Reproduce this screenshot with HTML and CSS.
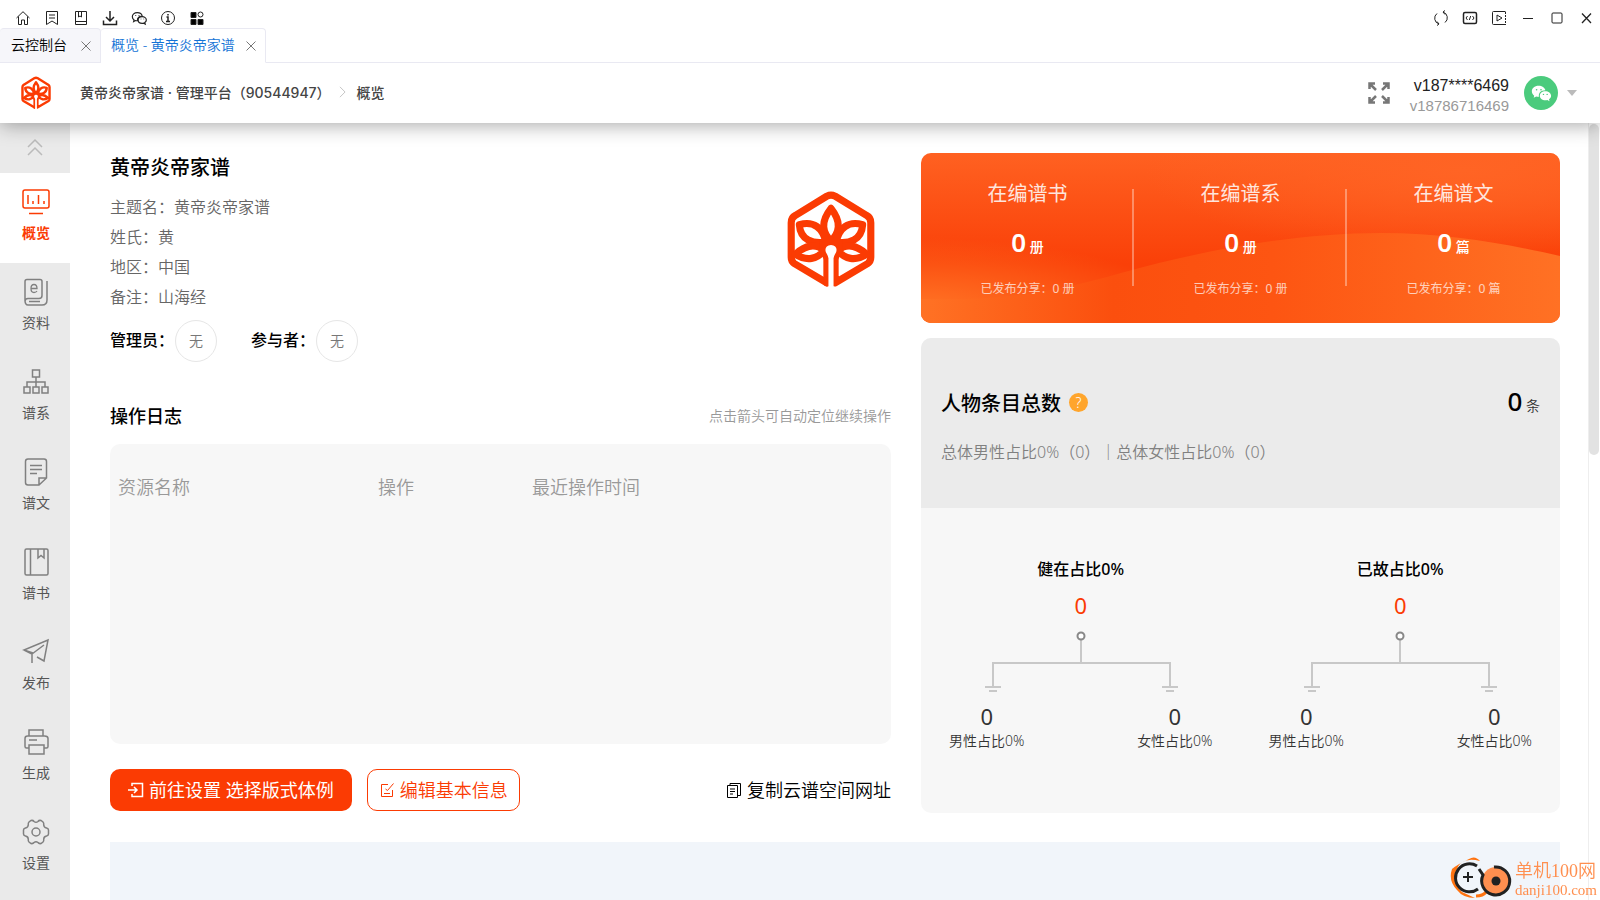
FILE: index.html
```html
<!DOCTYPE html>
<html lang="zh-CN">
<head>
<meta charset="utf-8">
<title>概览 - 黄帝炎帝家谱</title>
<link rel="stylesheet" href="styles.css">
</head>
<body>
<svg class="defs" aria-hidden="true">
  <symbol id="logo" viewBox="0 0 90 98">
    <g fill="none" stroke="#fb3b03" stroke-width="7" stroke-linejoin="round" stroke-linecap="round">
      <path d="M41 91 9 72Q6 70 6 66V32Q6 27 10 25L41 6Q45 4 49 6L80 25Q84 27 84 32V66Q84 70 81 72L49 91V65"/>
      <path d="M41 91V65"/>
      <path d="M45 18C34 32 37 42 45 50C53 42 56 32 45 18Z"/>
      <path d="M14 34C15 49 27 53 40 51C37 37 28 30 14 34ZM76 34C75 49 63 53 50 51C53 37 62 30 76 34Z"/>
      <path d="M10 63C21 70 32 68 38 59C30 52 20 54 10 63ZM80 63C69 70 58 68 52 59C60 52 70 54 80 63Z"/>
    </g>
    <path d="M34 48H56V60L51 70H39L34 60Z" fill="#fb3b03"/>
    <path d="M42.500 98V67Q42 64 40 61Q38 55 45 54Q52 55 50 61Q48 64 47.500 67V98Z" fill="#fff"/>
  </symbol>
  <symbol id="close" viewBox="0 0 12 12"><path d="m1.500 1.500 9 9m0-9-9 9" fill="none" stroke="currentColor"/></symbol>
  <symbol id="wechat" viewBox="0 0 24 24">
    <path d="M9.500 4C4.800 4 2 7 2 10.200c0 2 1 3.500 2.600 4.700L4 17.300l2.800-1.500c1 .3 2 .4 3 .3C9 12 12 9 16.800 9 16.200 6 13 4 9.500 4Z"/>
    <path d="M16.700 10c-3.500 0-6 2.300-6 5s2.500 5 6 5c.8 0 1.500-.1 2.200-.3l2.400 1.300-.6-2.200c1.500-1 2.300-2.300 2.300-3.800 0-2.700-2.800-5-6.300-5Z"/>
  </symbol>
  <symbol id="tree" viewBox="0 0 194 62">
    <g fill="none" stroke="#c8c8c8" stroke-width="2">
      <path d="M97 9v23M9 56V32h177v24M1 56h16M5 60h8M178 56h16M182 60h8"/>
    </g>
    <circle cx="97" cy="5" r="3.500" fill="#fff" stroke="#888" stroke-width="2"/>
  </symbol>
</svg>

<div class="toolbar">
  <div class="tools">
    <button aria-label="主页"><svg viewBox="0 0 16 16"><path d="M1.500 8 8 1.700 14.500 8M3.500 6.500v8h3V10h3v4.500h3v-8"/></svg></button>
    <button aria-label="书签"><svg viewBox="0 0 16 16"><path d="M2.500 1.500h11v13L8 11l-5.500 3.500ZM5 5h6M5 8h6"/></svg></button>
    <button aria-label="谱书"><svg viewBox="0 0 16 16"><path d="M2.500 1.500h11v13h-11ZM2.500 11.500h11M5.500 1.500V7L7 6l1.500 1V1.500"/></svg></button>
    <button aria-label="下载"><svg viewBox="0 0 16 16" stroke-width="1.500"><path d="M8 1v10M4 7l4 4 4-4M1.500 10.500v4h13v-4"/></svg></button>
    <button aria-label="微信"><svg viewBox="0 0 24 24" stroke-width="1.800"><use href="#wechat"/><path d="M7 8v1m5-1v1m3 4v1m4-1v1"/></svg></button>
    <button aria-label="信息"><svg viewBox="0 0 16 16"><circle cx="8" cy="8" r="6.500"/><path d="M8 4v1.500M6.500 7H8v4.500M6 11.500h4" stroke-width="1.500"/></svg></button>
    <button aria-label="应用"><svg viewBox="0 0 16 16"><path d="M2 2.500h5v5H2ZM2 9.500h5v5H2ZM9 9.500h5v5H9Z" fill="#000"/><circle cx="11.500" cy="4.500" r="2.500"/></svg></button>
  </div>
  <div class="tools">
    <button aria-label="刷新"><svg viewBox="0 0 16 16"><path d="M6 14A6 6 0 0 1 4 3.500M10 2A6 6 0 0 1 12 12.500M12 .5 10 2l2 2.500M4 15.500 6 14l-2-2.500"/></svg></button>
    <button aria-label="代码"><svg viewBox="0 0 16 16"><rect x="1.500" y="2.500" width="13" height="11" rx="1.500" stroke-width="1.500"/><path d="M5.500 6 4 8l1.500 2M10.500 6 12 8l-1.500 2M8.700 6l-1.400 4"/></svg></button>
    <button aria-label="播放"><svg viewBox="0 0 16 16"><path d="M14.500 1.500h-12q-1 0-1 1v11q0 1 1 1h12M6 5v6l5-3Z"/><path d="M14.500 2v13" stroke-dasharray="2 1"/></svg></button>
    <button aria-label="最小化"><svg viewBox="0 0 16 16"><path d="M3 8.500h10"/></svg></button>
    <button aria-label="最大化"><svg viewBox="0 0 16 16"><rect x="3" y="3" width="10" height="10" rx="1"/></svg></button>
    <button aria-label="关闭"><svg viewBox="0 0 16 16" stroke-width="1.300"><path d="m4 3.500 9 9.500m0-9.500L4 13"/></svg></button>
  </div>
</div>

<div class="tabs">
  <div class="tab"><a href="#">云控制台</a><button aria-label="关闭标签"><svg><use href="#close"/></svg></button></div>
  <div class="tab active"><a href="#">概览 - 黄帝炎帝家谱</a><button aria-label="关闭标签"><svg><use href="#close"/></svg></button></div>
</div>

<header class="header">
  <svg class="brand"><use href="#logo"/></svg>
  <nav class="crumbs"><a href="#">黄帝炎帝家谱 · 管理平台（90544947）</a><svg viewBox="0 0 8 14"><path d="m1 1 6 6-6 6"/></svg><a href="#">概览</a></nav>
  <button class="expand" aria-label="全屏"><svg viewBox="0 0 22 22"><path d="M1.500 7V1.500H7M15 1.500h5.500V7M20.500 15v5.500H15M7 20.500H1.500V15M2 2l6 6M20 2l-6 6M20 20l-6-6M2 20l6-6"/></svg></button>
  <div class="user"><span class="user-name">v187****6469</span><span class="user-id">v18786716469</span></div>
  <button class="account" aria-label="账户">
    <span class="avatar"><svg viewBox="0 0 24 24"><use href="#wechat"/><g fill="#4bcb7d"><circle cx="7.200" cy="8.500" r=".9"/><circle cx="12" cy="8.500" r=".9"/><circle cx="14.700" cy="13.500" r=".8"/><circle cx="18.700" cy="13.500" r=".8"/></g></svg></span>
    <svg class="caret" viewBox="0 0 12 8"><path d="M1 1h10L6 7Z"/></svg>
  </button>
</header>

<div class="body">
  <nav class="sidebar">
    <button class="collapse" aria-label="收起"><svg viewBox="0 0 16 18"><path d="m1 9 7-7 7 7M1 17l7-7 7 7"/></svg></button>
    <a class="item active" href="#"><svg viewBox="0 0 28 28"><rect x="1" y="2" width="26" height="18" rx="2"/><path d="M6 7v9M11 13v3M16.500 7v9M22 13v3M7 25.500h14"/></svg><span>概览</span></a>
    <a class="item" href="#"><svg viewBox="0 0 28 28"><path d="M5 1.500h13q2 0 2 2v14q0 3-3 3H6q-3 0-3 3V3.500q0-2 2-2ZM3 22q0 5 3 5h14q5 0 5-5V3M7 23.500h11"/><path d="M9 10.500h6q0-4-3-4t-3 4 3 4q2 0 3-1.500" stroke-width="1.300"/></svg><span>资料</span></a>
    <a class="item" href="#"><svg viewBox="0 0 28 28"><path d="M10.500 2h7v7h-7ZM2 19h6v6H2ZM11 19h6v6h-6ZM20 19h6v6h-6ZM14 9v10M5 19v-5h18v5"/></svg><span>谱系</span></a>
    <a class="item" href="#"><svg viewBox="0 0 28 28"><path d="M17 27H6q-2.500 0-2.500-2.500v-21Q3.500 1 6 1h16q2.500 0 2.500 2.500V20ZM17 27v-7h7.500M8 7.500h12M8 11.500h12M8 15.500h7"/></svg><span>谱文</span></a>
    <a class="item" href="#"><svg viewBox="0 0 28 28"><rect x="3" y="1" width="23" height="26" rx="1.500"/><path d="M8.500 1v26M16 1v9l3-2.500 3 2.500V1"/></svg><span>谱书</span></a>
    <a class="item" href="#"><svg viewBox="0 0 28 28"><path d="M11 15 2 12 26 2 22 23l-7-4M2 12l8 4v9M10 16 22 7"/></svg><span>发布</span></a>
    <a class="item" href="#"><svg viewBox="0 0 28 28"><path d="M7 8V2h14v6M7 20H4.500Q3 20 3 18.500v-8Q3 8 5.500 8h17Q26 8 26 10.500v8q0 1.500-1.500 1.500H22M7 17h15v9H7ZM7 12h8"/></svg><span>生成</span></a>
    <a class="item" href="#"><svg viewBox="0 0 28 28"><circle cx="14" cy="14" r="4"/><path d="M9 2.500q2-.5 3 1 2 1.500 4 0 1-1.500 3-1l2 1.500q1 1 .7 2.500 0 3 2.800 3.500 2 .5 2 2v4q0 1.500-2 2-2.800.5-2.800 3.500.3 1.500-.7 2.500l-2 1.500q-2 .5-3-1-2-1.500-4 0-1 1.500-3 1L7 24q-1-1-.7-2.500 0-3-2.800-3.500-2-.5-2-2v-4q0-1.500 2-2 2.800-.5 2.800-3.500Q6 5 7 4Z"/></svg><span>设置</span></a>
  </nav>

  <main class="main">
    <div class="columns">
      <section class="left">
        <div class="intro">
          <div>
            <h1>黄帝炎帝家谱</h1>
            <p>主题名：黄帝炎帝家谱</p>
            <p>姓氏：黄</p>
            <p>地区：中国</p>
            <p>备注：山海经</p>
          </div>
          <svg class="emblem"><use href="#logo"/></svg>
        </div>
        <div class="people"><b>管理员：</b><span class="none">无</span><b class="second">参与者：</b><span class="none">无</span></div>
        <div class="log-head"><h2>操作日志</h2><span>点击箭头可自动定位继续操作</span></div>
        <div class="log">
          <table><thead><tr><th class="c1">资源名称</th><th class="c2">操作</th><th>最近操作时间</th></tr></thead></table>
        </div>
        <div class="actions">
          <button class="btn primary"><svg viewBox="0 0 16 16" stroke-width="1.500"><path d="M4 4V1.500h10.500v13H4V12M0 8h9M6 5l3 3-3 3"/></svg>前往设置 选择版式体例</button>
          <button class="btn outline"><svg viewBox="0 0 16 16"><path d="M9 2.500H2.500v12h11V8M5 11.500h6M14.500 1.500l-6 7-2-1.500"/></svg>编辑基本信息</button>
          <button class="copy"><svg viewBox="0 0 16 16"><path d="M1.500 3.500h10v12h-10ZM4 3.500v-2h10.500v12h-3M4 7h5M4 9.500h5M4 12h3"/></svg>复制云谱空间网址</button>
        </div>
      </section>

      <section class="right">
        <div class="summary">
          <svg class="wave" viewBox="0 0 639 170" preserveAspectRatio="none" aria-hidden="true">
            <defs>
              <linearGradient id="base" x1="0" y1="0" x2="0" y2="1"><stop offset="0" stop-color="#ff6121"/><stop offset=".65" stop-color="#fa4008"/><stop offset="1" stop-color="#fa4008"/></linearGradient>
              <radialGradient id="glow" cx="0" cy=".9" r=".4"><stop offset="0" stop-color="#ff7224"/><stop offset="1" stop-color="#ff7224" stop-opacity="0"/></radialGradient>
              <radialGradient id="shine" cx=".85" cy=".1" r=".5"><stop offset="0" stop-color="#ff6424"/><stop offset="1" stop-color="#ff6424" stop-opacity="0"/></radialGradient>
              <linearGradient id="hill"><stop offset="0" stop-color="#ff7224"/><stop offset=".3" stop-color="#fb4f0e"/><stop offset=".55" stop-color="#fd5512"/><stop offset="1" stop-color="#ff7124"/></linearGradient>
            </defs>
            <path d="M0 0h639v170H0Z" fill="url(#base)"/><path d="M0 0h639v170H0Z" fill="url(#shine)"/><path d="M0 0h639v170H0Z" fill="url(#glow)"/>
            <path d="M0 146C80 148 130 140 200 120C290 95 380 80 460 80C530 80 590 92 639 103V170H0Z" fill="url(#hill)"/>
          </svg>
          <div class="stat"><h3>在编谱书</h3><p class="num"><b>0</b> 册</p><p class="shared">已发布分享：0 册</p></div>
          <div class="stat"><h3>在编谱系</h3><p class="num"><b>0</b> 册</p><p class="shared">已发布分享：0 册</p></div>
          <div class="stat"><h3>在编谱文</h3><p class="num"><b>0</b> 篇</p><p class="shared">已发布分享：0 篇</p></div>
        </div>
        <div class="persons">
          <div class="total">
            <div class="total-row"><h2>人物条目总数</h2><button class="help" aria-label="帮助">?</button><span class="count"><b>0</b> 条</span></div>
            <p>总体男性占比0%（0）｜总体女性占比0%（0）</p>
          </div>
          <div class="trees">
            <div class="tree">
              <h3>健在占比0%</h3><p class="tree-num">0</p><svg><use href="#tree"/></svg>
              <div class="leaves"><div><b>0</b><span>男性占比0%</span></div><div><b>0</b><span>女性占比0%</span></div></div>
            </div>
            <div class="tree">
              <h3>已故占比0%</h3><p class="tree-num">0</p><svg><use href="#tree"/></svg>
              <div class="leaves"><div><b>0</b><span>男性占比0%</span></div><div><b>0</b><span>女性占比0%</span></div></div>
            </div>
          </div>
        </div>
      </section>
    </div>
    <div class="banner"></div>
  </main>
  <div class="scrollbar"><div class="thumb"></div></div>
</div>

<div class="watermark">
  <svg viewBox="0 0 64 44" fill="none">
    <path d="M20 3Q26-1 31 5Q12 0 7 15Q4 28 13 36L26 42Q14 42 8 34Q-1 25 3 13Q9 8 20 3Z" fill="#ff7310"/>
    <path d="M27 40Q34 40 37 36" stroke="#ff7310" stroke-width="3"/>
    <path d="M28 10A14 14 0 1 0 29 33" stroke="#222" stroke-width="3"/>
    <path d="M19 16v10M14 21h10" stroke="#222" stroke-width="2"/>
    <circle cx="47" cy="25" r="14" fill="#ff8f4f"/>
    <path d="M45 11A14 14 0 1 1 34 19L30 13" stroke="#222" stroke-width="3"/>
    <circle cx="47" cy="25" r="4.500" fill="#222"/>
  </svg>
  <div><span class="wm-name">单机100网</span><span class="wm-url">danji100.com</span></div>
</div>
</body>
</html>
```
FILE: styles.css
```css
* { box-sizing: border-box; margin: 0; padding: 0; }
body {
  display: flex;
  flex-direction: column;
  height: 100vh;
  overflow: hidden;
  background: #fff;
  color: #000;
  font-family: "Noto Sans", "Noto Sans CJK SC", sans-serif;
  font-size: 14px;
}
button { border: 0; background: none; font: inherit; color: inherit; cursor: pointer; }
a { color: inherit; text-decoration: none; }
svg { display: block; fill: none; }
.defs { position: absolute; width: 0; height: 0; }

.toolbar { display: flex; justify-content: space-between; height: 28px; padding: 10px 6px 0 15px; }
.tools { display: flex; gap: 13px; }
.tools button, .tools svg { width: 16px; height: 16px; }
.tools svg { stroke: #222; }

.tabs { position: relative; z-index: 2; display: flex; height: 35px; border-bottom: 1px solid #e9e9f2; background: #fff; }
.tab {
  display: flex;
  align-items: center;
  gap: 13px;
  height: 35px;
  padding: 0 8px 0 11px;
  border: 1px solid #e9e9f2;
  border-left-width: 0;
  border-radius: 4px 4px 0 0;
  background: #f6f6fa;
  font-weight: 350;
}
.tab a { padding-bottom: 3px; }
.tab.active { gap: 10px; padding-left: 10px; background: #fff; border-bottom-color: #fff; color: #1373d6; }
.tab svg { width: 12px; height: 12px; color: #777; }

.header {
  position: relative;
  z-index: 1;
  display: flex;
  align-items: center;
  height: 60px;
  padding: 0 22px 0 20px;
  background: #fff;
  box-shadow: 0 2px 20px rgba(0, 0, 0, .35);
}
.brand { width: 32px; height: 34px; }
.crumbs { display: flex; align-items: center; margin-left: 28px; padding-bottom: 2px; font-family: "Inter", "Noto Sans CJK SC", sans-serif; font-weight: 500; color: #444; }
.crumbs svg { width: 7px; height: 12px; margin: 0 11px 0 8px; stroke: #bbb; }
.expand { margin-left: auto; }
.expand svg { width: 22px; height: 22px; stroke: #777; stroke-width: 2.500; }
.user { display: flex; flex-direction: column; align-items: flex-end; margin: 6px 15px 0 20px; font-family: "Liberation Sans", sans-serif; font-size: 15px; line-height: 20px; }
.user-name { font-size: 16px; color: #222; }
.user-id { color: #999; }
.account { display: flex; align-items: center; gap: 8px; }
.avatar { display: grid; place-items: center; width: 34px; height: 34px; border-radius: 50%; background: #4bcb7d; }
.avatar svg { width: 22px; height: 24px; fill: #fff; }
.caret { width: 12px; height: 8px; fill: #bbb; }

.body { flex: 1; display: flex; min-height: 0; }
.sidebar { flex: none; width: 70px; background: #eaeaea; color: #555; }
.sidebar svg { stroke: #808080; stroke-width: 1.500; }
.collapse { display: grid; place-items: center; width: 100%; height: 48px; margin-bottom: 2px; }
.sidebar .collapse svg { width: 16px; height: 18px; stroke: #bbb; }
.item { display: flex; flex-direction: column; align-items: center; gap: 7px; height: 90px; padding: 15px 0 0 2px; line-height: 20px; }
.item svg { width: 28px; height: 28px; }
.item.active { background: #fff; color: #fb3b03; font-weight: 700; }
.item.active svg { stroke: #fb3b03; }

.main { flex: 1; min-width: 0; padding: 30px 28px 0 40px; overflow: hidden; }
.columns { display: grid; grid-template-columns: 55fr 45fr; gap: 30px; }
.left { display: flex; flex-direction: column; }
.intro { display: flex; justify-content: space-between; padding-right: 14px; }
.intro h1 { padding-top: 1px; font-size: 20px; line-height: 28px; font-weight: 500; margin-bottom: 10px; }
.intro p { font-size: 16px; line-height: 30px; color: #666; font-weight: 350; }
.emblem { width: 92px; height: 100px; margin-top: 37px; }
.people { display: flex; align-items: center; margin-top: 8px; font-size: 16px; }
.people b { padding-bottom: 4px; font-weight: 500; }
.none { display: grid; place-items: center; width: 42px; height: 42px; margin-left: 1px; padding-bottom: 3px; border: 1px solid #e6e6e6; border-radius: 50%; color: #777; font-size: 14px; font-weight: 350; }
.people .second { margin-left: 34px; }
.log-head { display: flex; justify-content: space-between; align-items: center; margin-top: 40px; line-height: 28px; }
.log-head h2 { font-size: 18px; font-weight: 500; }
.log-head span { color: #999; font-weight: 350; }
.log { min-height: 300px; margin-top: 14px; padding: 30px 0; border-radius: 10px; background: #f7f7f7; }
.log table { width: 100%; border-collapse: collapse; table-layout: fixed; }
.log th { padding: 0 8px; text-align: left; font-size: 18px; line-height: 26px; font-weight: 350; color: #999; }
.log .c1 { width: 260px; }
.log .c2 { width: 154px; }
.actions { display: flex; align-items: center; margin-top: 25px; font-size: 18px; line-height: 24px; }
.actions svg { width: 16px; height: 16px; stroke: currentColor; }
.btn { display: flex; align-items: center; gap: 5px; height: 42px; border-radius: 10px; }
.primary { padding: 0 18px; background: #fb3b03; color: #fff; }
.outline { margin-left: 15px; padding: 0 11px; border: 1px solid #fb3b03; color: #fb3b03; font-weight: 350; }
.copy { display: flex; align-items: center; gap: 5px; margin-left: auto; font-weight: 350; }

.summary { position: relative; display: flex; height: 170px; border-radius: 10px; overflow: hidden; color: #fff; text-align: center; }
.wave { position: absolute; inset: 0; width: 100%; height: 100%; }
.stat { position: relative; flex: 1; padding-top: 27px; }
.stat + .stat::before { content: ""; position: absolute; left: -2px; top: 36px; width: 2px; height: 97px; background: rgba(255, 255, 255, .35); }
.stat h3 { font-size: 20px; line-height: 28px; font-weight: 400; opacity: .85; }
.num { margin-top: 14px; font-size: 14px; line-height: 40px; font-weight: 500; }
.num b { font-size: 26px; font-weight: 600; }
.shared { margin-top: 12px; font-size: 12px; line-height: 20px; opacity: .7; }

.persons { margin-top: 15px; border-radius: 10px; overflow: hidden; background: #f7f7f7; }
.total { height: 170px; padding: 43px 20px 0; background: #ebebeb; }
.total-row { display: flex; align-items: center; line-height: 40px; }
.total h2 { font-size: 20px; font-weight: 500; }
.help { width: 19px; height: 19px; margin: 0 0 2px 8px; border-radius: 50%; background: #ffa52c; color: #fff; font-size: 14px; line-height: 19px; font-weight: 350; }
.count { margin-left: auto; color: #333; font-weight: 350; }
.count b { font-size: 26px; font-weight: 500; color: #000; }
.total p { margin-top: 14px; font-size: 16px; line-height: 24px; font-weight: 350; color: #808080; }
.trees { display: flex; padding: 49px 0 62px; }
.tree { flex: 1; display: flex; flex-direction: column; align-items: center; }
.tree h3 { font-size: 16px; line-height: 24px; font-weight: 500; }
.tree-num { margin-top: 8px; font-size: 22px; line-height: 32px; color: #fb3b03; }
.tree svg { width: 194px; height: 62px; margin-top: 10px; }
.leaves { align-self: stretch; display: flex; justify-content: space-between; margin-top: 8px; padding: 0 28px; text-align: center; color: #333; }
.leaves div { display: flex; flex-direction: column; }
.leaves b { font-size: 22px; line-height: 30px; font-weight: 400; }
.leaves span { line-height: 20px; font-weight: 350; }
.banner { height: 300px; margin-top: 29px; background: #f1f5fa; }

.scrollbar { flex: none; width: 12px; padding-top: 1px; border-left: 1px solid #eee; }
.thumb { width: 10px; height: 331px; border-radius: 5px; background: #e2e2e2; }

.watermark { position: fixed; right: 3px; bottom: 0; z-index: 2; display: flex; align-items: center; gap: 2px; color: #ff8f4f; }
.watermark > svg { width: 64px; height: 44px; }
.watermark div { padding-top: 3px; }
.watermark span { display: block; }
.wm-name { font-family: "Liberation Serif", "Noto Sans CJK SC", serif; font-size: 18px; line-height: 20px; font-weight: 350; }
.wm-url { font-family: "Liberation Serif", serif; font-size: 15px; line-height: 18px; }
```
